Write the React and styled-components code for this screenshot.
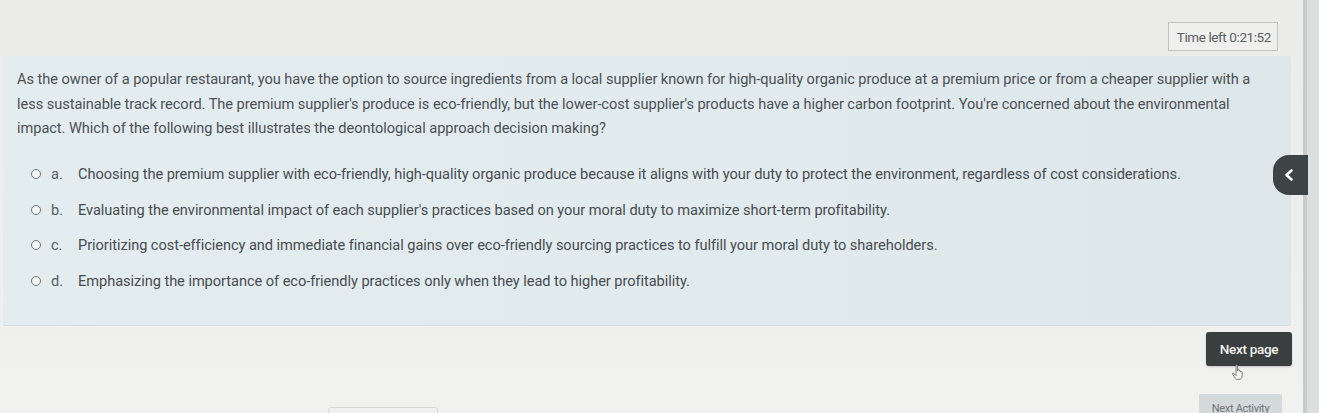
import React from "react"
import styled, { createGlobalStyle } from "styled-components"

const GlobalStyle = createGlobalStyle`
  html, body {
    margin: 0;
    padding: 0;
    background: #ecedec;
  }
  body {
    font-family: Roboto, "Liberation Sans", sans-serif;
  }
`

const question =
  "As the owner of a popular restaurant, you have the option to source ingredients from a local supplier known for high-quality organic produce at a premium price or from a cheaper supplier with a less sustainable track record. The premium supplier's produce is eco-friendly, but the lower-cost supplier's products have a higher carbon footprint. You're concerned about the environmental impact. Which of the following best illustrates the deontological approach decision making?"

const options = [
  { key: "a.", text: "Choosing the premium supplier with eco-friendly, high-quality organic produce because it aligns with your duty to protect the environment, regardless of cost considerations." },
  { key: "b.", text: "Evaluating the environmental impact of each supplier's practices based on your moral duty to maximize short-term profitability." },
  { key: "c.", text: "Prioritizing cost-efficiency and immediate financial gains over eco-friendly sourcing practices to fulfill your moral duty to shareholders." },
  { key: "d.", text: "Emphasizing the importance of eco-friendly practices only when they lead to higher profitability." },
]

const App = () => {
  return (
    <Page>
      <GlobalStyle />
      <Main>
        <Header>
          <Timer>Time left 0:21:52</Timer>
        </Header>
        <Panel>
          <Question>{question}</Question>
          <Options>
            {options.map(o => (
              <Option key={o.key}>
                <Radio />
                <Letter>{o.key}</Letter>
                <OptionText>{o.text}</OptionText>
              </Option>
            ))}
          </Options>
          <DrawerTab>
            <svg width="12" height="14" viewBox="0 0 12 14">
              <path d="M8.5 2.5 L3.5 7 L8.5 11.5" fill="none" stroke="#fff" strokeWidth="2.6" strokeLinecap="round" strokeLinejoin="round" />
            </svg>
          </DrawerTab>
        </Panel>
        <Footer>
          <NextPage>
            Next page
            <Cursor>
              <svg width="16" height="17" viewBox="0 0 16 17">
                <path d="M5 1.5 C5 0.8 6.4 0.8 6.4 1.5 L6.4 7 L6.8 5.6 C7 5 8.2 5 8.2 5.8 L8.2 7.2 C8.4 6.6 9.7 6.6 9.7 7.4 L9.7 8 C10 7.4 11.2 7.5 11.2 8.3 L11.2 11.5 C11.2 14 9.8 15.5 7.8 15.5 L6.6 15.5 C5.4 15.5 4.6 14.8 3.8 13.6 L1.6 10.2 C1.2 9.5 2.2 8.8 2.8 9.4 L5 11.6 Z" fill="#f4f4f4" stroke="#707070" strokeWidth="0.9" strokeLinejoin="round" />
              </svg>
            </Cursor>
          </NextPage>
          <NextActivity>Next Activity</NextActivity>
        </Footer>
        <FaintField />
      </Main>
      <ScrollStrip />
    </Page>
  )
}

const Page = styled.div`
  display: flex;
  width: 1319px;
  height: 413px;
  overflow: hidden;
  background: linear-gradient(180deg, #ebebea 0%, #eeeeed 60%, #f1f1f0 100%);
`

const Main = styled.div`
  position: relative;
  flex: 1;
  display: flex;
  flex-direction: column;
`

const ScrollStrip = styled.div`
  width: 12px;
  background: #dcdfdf;
  border-left: 4px solid #c9cccc;
`

const Header = styled.div`
  flex-shrink: 0;
  height: 56px;
  display: flex;
  justify-content: flex-end;
  align-items: flex-start;
  padding: 22px 25px 0 0;
  box-sizing: border-box;
`

const Timer = styled.div`
  height: 29px;
  box-sizing: border-box;
  padding: 0 6px 0 8px;
  display: flex;
  align-items: center;
  border: 1px solid #bfc2c2;
  background: #efefee;
  color: #5b5f61;
  font-size: 13.5px;
  letter-spacing: -0.4px;
`

const Panel = styled.div`
  flex-shrink: 0;
  position: relative;
  margin: 0 12px 0 3px;
  height: 270px;
  box-sizing: border-box;
  padding: 11px 30px 0 14px;
  background: linear-gradient(90deg, #e3edf0 0%, #e1ebee 60%, #dde6e8 100%);
  border-radius: 2px;
  border-bottom: 1px solid #d4dcdf;
`

const Question = styled.p`
  margin: 0;
  font-size: 14.6px;
  line-height: 24.5px;
  color: #4b5054;
  letter-spacing: -0.05px;
`

const Options = styled.div`
  margin-top: 16px;
  display: flex;
  flex-direction: column;
  padding-left: 14px;
`

const Option = styled.div`
  display: flex;
  align-items: center;
  height: 35.5px;
  color: #474c4f;
  font-size: 14.6px;
  letter-spacing: -0.05px;
`

const Radio = styled.span`
  width: 8px;
  height: 8px;
  border: 1.5px solid #6c7174;
  border-radius: 50%;
  background: #f1f5f6;
  flex-shrink: 0;
`

const Letter = styled.span`
  width: 27px;
  margin-left: 10px;
  color: #595e61;
`

const OptionText = styled.span``

const DrawerTab = styled.div`
  position: absolute;
  right: -17px;
  top: 99px;
  width: 35px;
  height: 40px;
  border-radius: 16px 0 0 16px;
  background: #3e4446;
  display: flex;
  align-items: center;
  justify-content: center;
  padding-right: 4px;
  box-sizing: border-box;
`

const Footer = styled.div`
  flex-shrink: 0;
  display: flex;
  flex-direction: column;
  align-items: flex-end;
  padding: 6px 11px 0 0;
`

const NextPage = styled.button`
  position: relative;
  width: 86px;
  height: 34px;
  border: none;
  border-radius: 3px;
  background: #3b3e3e;
  color: #f2f2f2;
  font-family: Roboto, "Liberation Sans", sans-serif;
  font-size: 13.5px;
  font-weight: 500;
  letter-spacing: -0.3px;
  padding: 0;
  box-shadow: 0 1px 2px rgba(0, 0, 0, 0.2);
`

const Cursor = styled.span`
  position: absolute;
  left: 25px;
  top: 32px;
  line-height: 0;
`

const NextActivity = styled.div`
  margin-top: 28px;
  margin-right: 10px;
  width: 83px;
  height: 22px;
  border-radius: 2px;
  background: #d4d9db;
  color: #6d7375;
  font-size: 11px;
  line-height: 13px;
  display: flex;
  justify-content: center;
  padding-top: 8px;
  box-sizing: border-box;
  letter-spacing: -0.3px;
`

const FaintField = styled.div`
  position: absolute;
  left: 328px;
  top: 407px;
  width: 108px;
  height: 20px;
  border: 1px solid #d6d8d8;
  border-radius: 3px;
`

export default App
